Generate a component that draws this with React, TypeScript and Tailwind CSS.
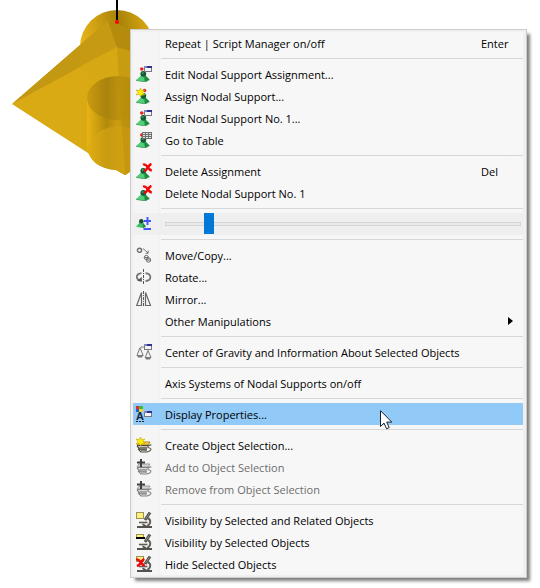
import type { ReactNode } from 'react';
import { useState } from 'react';

const Svg = ({ children }: { children: ReactNode }) => (
  <svg viewBox="0 0 16 16" className="h-4 w-4" aria-hidden="true">{children}</svg>
);

const Pyramid = () => (
  <>
    <path d="M6.5 8.5 0 14.2 9 16 13.5 13.6 9 9Z" fill="#2fb457" />
    <path d="M6.5 8.5 0 14.2 9 16Z" fill="#52cf7a" />
    <path d="M9 16 13.5 13.6 8.5 9Z" fill="#1f8a40" />
    <path d="M0 14.4 9 16 13.5 13.8" fill="none" stroke="#3c7a50" strokeWidth=".5" />
    <circle cx="7.3" cy="7.8" r="2.9" fill="#145c32" />
    <circle cx="6.7" cy="7" r="1" fill="#3f9962" />
  </>
);

const Win = ({ x = 8, y = 0 }: { x?: number; y?: number }) => (
  <g shapeRendering="crispEdges">
    <rect x={x} y={y} width="8" height="6" fill="#77777c" />
    <rect x={x} y={y} width="8" height="2" fill="#2e3192" />
    <rect x={x} y={y} width="3" height="2" fill="#7f86b8" />
    <rect x={x + 1} y={y + 2} width="6" height="3" fill="#f3f3fa" />
  </g>
);

const Star = () => (
  <path d="M4.5 0 5.7 2.7 8.8 2 7 4.6 9 7 6 6.6 4.6 9 3.4 6.3 0 7 2 4.6 0 2 3.3 2.6Z" fill="#fff000" stroke="#b79a00" strokeWidth=".5" />
);

const Cross = ({ x = 7, y = 0 }: { x?: number; y?: number }) => (
  <path
    d="M0 1.8C2 .6 4 3 5 4.5S7.5 7.5 8.8 7.6M8.4 .8C6.5 1.6 5.5 3.2 4.6 4.8S2.5 7.5 1 8.2"
    transform={`translate(${x} ${y})`}
    fill="none"
    stroke="#f00808"
    strokeWidth="2.5"
  />
);

const Stack = ({ dim = false }: { dim?: boolean }) => (
  <>
    <path d="M3 5H14L12 8H1Z" fill={dim ? '#d5d5d5' : '#f6d23c'} stroke={dim ? '#9a9a9a' : '#b08a28'} />
    <path d="M3 9.2H13L10 13H4Z" fill={dim ? '#d0d0d0' : '#b4b1a6'} />
    <path d="M1 8.5H14M1 9 4 12.2H11M2 11.8 5 15H11" fill="none" stroke={dim ? '#808080' : '#4b4841'} strokeWidth="1.2" />
    <path d="M4 10.5H11M5 13.6H11" stroke={dim ? '#a0a0a0' : '#7d796e'} />
    <path d="M15.5 8C11.5 7.5 11 10.5 13.5 11S15 14.8 11 14.8" fill="none" stroke={dim ? '#8a8a8a' : '#66635b'} strokeWidth="1.2" />
  </>
);

const Microscope = () => (
  <>
    <path d="M14 .5 9 8" stroke="#55524e" strokeWidth="3" />
    <path d="M13.4 1.4 9.6 7" stroke="#9d9b96" strokeWidth=".8" />
    <path d="M11.5 6C15.5 7.5 15 12 11 14" fill="none" stroke="#625f5a" strokeWidth="1.9" />
    <path d="M3 10.5H11.5" stroke="#605d59" strokeWidth="1.6" />
    <path d="M1 15H16M6.5 12.3 10 14.3" stroke="#55524e" strokeWidth="1.9" />
  </>
);

const EditIcon = () => (
  <Svg><circle cx="5.8" cy="3" r="1.8" fill="#ed2020" /><Pyramid /><Win /></Svg>
);

const AssignIcon = () => (
  <Svg><Pyramid /><circle cx="8.5" cy="2.5" r="1.8" fill="#ed2020" /><Star /></Svg>
);

const TableIcon = () => (
  <Svg>
    <circle cx="5.8" cy="3" r="1.8" fill="#ed2020" />
    <Pyramid />
    <rect x="6" width="10" height="7" fill="#707070" />
    <path d="M7 1.5H15M7 3.5H15M7 5.5H15" stroke="#e6e6e6" strokeDasharray="2 1" />
  </Svg>
);

const DeleteIcon = () => <Svg><Pyramid /><Cross /></Svg>;

const SizeIcon = () => (
  <Svg>
    <path d="M4.5 5.5 0 10.8 7 12 10 10.5Z" fill="#3fbf68" />
    <path d="M7 12 10 10.5 6.5 6Z" fill="#1f8a40" />
    <circle cx="5.3" cy="5.2" r="2.3" fill="#174f30" />
    <path d="M11.5 1V9M8 5H15M7.5 13H15" stroke="#4058f5" strokeWidth="1.9" />
  </Svg>
);

const MoveIcon = () => (
  <Svg>
    <g fill="none" stroke="#6c6c6c">
      <circle cx="3.5" cy="3.3" r="2.1" strokeWidth="1.4" />
      <circle cx="10.3" cy="10.5" r="2.1" />
      <circle cx="12.5" cy="13" r="2.2" />
      <path d="M8.5 10.5H12.5M10.5 13H14.5" />
      <path d="M7 1.5 12 6M12.2 3.5V6.3H9.5" strokeWidth=".9" />
    </g>
  </Svg>
);

const RotateIcon = () => (
  <Svg>
    <g fill="none" stroke="#777">
      <path d="M7.5 0V16" stroke="#555" strokeDasharray="3 1 1 1" />
      <path d="M5.5 4.2C0 4.8-.8 9.4 3.4 11" strokeWidth="1.8" />
      <path d="M9.5 4.2C16 5 16 11.4 9.5 12" strokeWidth="1.8" />
    </g>
    <path d="M1 11.8 5.8 8V12.8Z" fill="#555" />
  </Svg>
);

const MirrorIcon = () => (
  <Svg>
    <path d="M.7 14.5 5.5 1.5V14.5ZM14.5 14.5 9.5 1.5V14.5Z" fill="none" stroke="#686868" strokeWidth="1.2" />
    <path d="M7.5 0V16" stroke="#555" strokeDasharray="3 1 1 1" />
  </Svg>
);

const GravityIcon = () => (
  <Svg>
    <path d="M3.8 4 1 11.5H7.2L4 4C4.5 2.8 7 2.7 9 3.5M12 6.5 9.3 13.5H15L12 6.5" fill="none" stroke="#777" />
    <path d="M.8 11H7.2L6 13.5H2ZM8.8 13H15.2L14 15.6H10Z" fill="#7b7b7b" />
    <Win />
  </Svg>
);

const DisplayIcon = () => (
  <Svg>
    <text x="0" y="14" fontSize="11" fontFamily="Liberation Sans, sans-serif" fontWeight="700" fill="#182338">A</text>
    <g shapeRendering="crispEdges">
      <rect width="3" height="3" fill="#ee2626" />
      <rect x="3" width="4" height="3" fill="#37bd38" />
      <rect y="3" width="3" height="3" fill="#2b58d8" />
      <rect x="3" y="3" width="4" height="3" fill="#f1d420" />
      <path d="M0 15.5H8" stroke="#222" strokeDasharray="2 1" />
    </g>
    <Win y={5} />
  </Svg>
);

const CreateIcon = () => <Svg><Stack /><Star /></Svg>;

const AddIcon = () => (
  <Svg><Stack dim /><path d="M5 0V8M1 3.5H9" stroke="#404040" strokeWidth="2" /></Svg>
);

const RelatedIcon = () => (
  <Svg><Microscope /><rect x=".5" y=".5" width="7" height="6" fill="#fff27a" stroke="#9a9258" /></Svg>
);

const VisibleIcon = () => (
  <Svg>
    <Microscope />
    <rect x=".5" y=".5" width="7" height="4" fill="#fff27a" stroke="#9a9258" />
    <rect y="3" width="9" height="2" fill="#000" />
  </Svg>
);

const HideIcon = () => (
  <Svg>
    <Microscope />
    <rect x=".5" y=".5" width="7" height="5" fill="#fff27a" stroke="#9a9258" />
    <Cross x={0} y={2} />
  </Svg>
);

type Item = {
  label: string;
  icon?: ReactNode;
  shortcut?: string;
  disabled?: boolean;
  submenu?: boolean;
  active?: boolean;
  slider?: boolean;
};

const groups: Item[][] = [
  [{ label: 'Repeat | Script Manager on/off', shortcut: 'Enter' }],
  [
    { label: 'Edit Nodal Support Assignment...', icon: <EditIcon /> },
    { label: 'Assign Nodal Support...', icon: <AssignIcon /> },
    { label: 'Edit Nodal Support No. 1...', icon: <EditIcon /> },
    { label: 'Go to Table', icon: <TableIcon /> },
  ],
  [
    { label: 'Delete Assignment', icon: <DeleteIcon />, shortcut: 'Del' },
    { label: 'Delete Nodal Support No. 1', icon: <DeleteIcon /> },
  ],
  [{ label: 'Support size', icon: <SizeIcon />, slider: true }],
  [
    { label: 'Move/Copy...', icon: <MoveIcon /> },
    { label: 'Rotate...', icon: <RotateIcon /> },
    { label: 'Mirror...', icon: <MirrorIcon /> },
    { label: 'Other Manipulations', submenu: true },
  ],
  [{ label: 'Center of Gravity and Information About Selected Objects', icon: <GravityIcon /> }],
  [{ label: 'Axis Systems of Nodal Supports on/off' }],
  [{ label: 'Display Properties...', icon: <DisplayIcon />, active: true }],
  [
    { label: 'Create Object Selection...', icon: <CreateIcon /> },
    { label: 'Add to Object Selection', icon: <AddIcon />, disabled: true },
    { label: 'Remove from Object Selection', icon: <AddIcon />, disabled: true },
  ],
  [
    { label: 'Visibility by Selected and Related Objects', icon: <RelatedIcon /> },
    { label: 'Visibility by Selected Objects', icon: <VisibleIcon /> },
    { label: 'Hide Selected Objects', icon: <HideIcon /> },
  ],
];

function SizeRow({ item }: { item: Item }) {
  const [size, setSize] = useState(11);
  return (
    <div className="flex h-[22px] items-center bg-[#efefef] pr-[2px]">
      <span className="w-8 shrink-0 pl-[3px]">{item.icon}</span>
      <input
        type="range"
        aria-label={item.label}
        value={size}
        onChange={(e) => setSize(Number(e.target.value))}
        className="h-[21px] min-w-0 flex-1 appearance-none bg-transparent [&::-webkit-slider-runnable-track]:h-1 [&::-webkit-slider-runnable-track]:border [&::-webkit-slider-runnable-track]:border-[#d6d6d6] [&::-webkit-slider-runnable-track]:bg-[#e7eaea] [&::-webkit-slider-thumb]:-mt-[10px] [&::-webkit-slider-thumb]:h-[21px] [&::-webkit-slider-thumb]:w-[10px] [&::-webkit-slider-thumb]:appearance-none [&::-webkit-slider-thumb]:bg-[#0078d7]"
      />
    </div>
  );
}

function MenuRow({ item }: { item: Item }) {
  const bg = item.active ? 'bg-[#91c9f7]' : '';
  return (
    <button
      type="button"
      role="menuitem"
      disabled={item.disabled}
      className={`relative flex h-[22px] w-full items-center text-left text-black disabled:text-[#6d6d6d] ${bg}`}
    >
      <span className="w-8 shrink-0 pl-[3px]">{item.icon}</span>
      <span className="flex-1 pt-[2px] whitespace-nowrap">{item.label}</span>
      {item.shortcut && <span className="w-[42px] pt-[2px]">{item.shortcut}</span>}
      {item.submenu && (
        <svg viewBox="0 0 5 8" className="mr-[10px] h-2 w-[5px]" aria-hidden="true"><path d="M0 0 5 4 0 8Z" /></svg>
      )}
      {item.active && (
        <svg viewBox="0 0 13 20" className="absolute top-[7px] left-[247px] h-5 w-[13px]" aria-hidden="true">
          <path d="M.5.7V16.5L4 13.1 6.6 18.8 9.2 17.6 6.7 12.1H11.8Z" fill="#fff" stroke="#17202c" />
        </svg>
      )}
    </button>
  );
}

function SupportModel() {
  return (
    <svg viewBox="0 0 180 190" className="absolute top-0 left-0 h-[190px] w-[180px]" aria-hidden="true">
      <defs>
        <linearGradient id="ball" gradientUnits="userSpaceOnUse" x1="80" x2="154" y1="50" y2="30">
          <stop offset="0" stopColor="#ecb719" />
          <stop offset=".3" stopColor="#cd9f13" />
          <stop offset=".6" stopColor="#a88208" />
          <stop offset="1" stopColor="#e0ad14" />
        </linearGradient>
        <linearGradient id="tube" gradientUnits="userSpaceOnUse" x1="87" x2="147" y1="0" y2="0">
          <stop offset="0" stopColor="#eab414" />
          <stop offset=".33" stopColor="#b1890c" />
          <stop offset=".5" stopColor="#cb9d10" />
          <stop offset="1" stopColor="#a27e08" />
        </linearGradient>
        <linearGradient id="mouth" gradientUnits="userSpaceOnUse" x1="87" x2="147" y1="0" y2="0">
          <stop offset="0" stopColor="#c99b10" />
          <stop offset=".33" stopColor="#a9830c" />
          <stop offset=".55" stopColor="#bd930e" />
          <stop offset="1" stopColor="#a8820a" />
        </linearGradient>
        <linearGradient id="cap" gradientUnits="userSpaceOnUse" x1="87" x2="125" y1="0" y2="0">
          <stop offset="0" stopColor="#e2af13" />
          <stop offset=".5" stopColor="#c89b10" />
          <stop offset="1" stopColor="#d0a111" />
        </linearGradient>
      </defs>
      <circle cx="117" cy="47" r="37" fill="url(#ball)" />
      <path d="M12 104 80 45 117 47 145 55V162L125 175 88 153Z" fill="#d9aa14" />
      <path d="M12 104 80 45 108 21 117 47Z" fill="#c39812" />
      <path d="M80 45 108 21 117 47 81 66Q79 54 80 45Z" fill="#c69b13" />
      <path d="M108 21 117 47 145 55V33Z" fill="#b48b0c" />
      <path d="M117 47 81 66Q86 76 94 81L119 77Z" fill="#d6a814" />
      <path d="M87 98A31 22 0 0 1 145 88V162L125 175 116 170C99 169 89 160 87 148Z" fill="url(#tube)" />
      <ellipse cx="118" cy="98" rx="31" ry="22" fill="url(#mouth)" />
      <path d="M87 148Q94 127 120 126L145 130V162L125 175 116 170C99 169 89 160 87 148Z" fill="url(#cap)" />
      <path d="M117 47 125 175 145 162V55Z" fill="#b78e0c" opacity=".5" />
      <path d="M117 0V20" stroke="#000" strokeWidth="2" />
      <circle cx="117" cy="22" r="2" fill="#f00" />
    </svg>
  );
}

export default function App() {
  return (
    <main className="relative min-h-screen bg-white pt-[29px] pr-[13px] pl-[130px] font-['Open_Sans',sans-serif] text-[11px] leading-4">
      <SupportModel />
      <div role="menu" className="relative border border-[#ccc] bg-[#f0f0f0] py-[2px] pr-[3px] pl-[2px] shadow-[4px_4px_3px_-1px_rgba(0,0,0,0.5)]">
        <div className="bg-linear-to-r from-[#f5f5f5] from-[25px] via-[#f0f0f0] via-[25px] to-[#f7f7f7] to-[28px]">
          {groups.map((items, i) => (
            <div key={i}>
              {i > 0 && <div role="separator" className="my-1 ml-7 h-px bg-[#d7d7d7]" />}
              {items.map((item) =>
                item.slider ? <SizeRow key={item.label} item={item} /> : <MenuRow key={item.label} item={item} />
              )}
            </div>
          ))}
        </div>
      </div>
    </main>
  );
}
